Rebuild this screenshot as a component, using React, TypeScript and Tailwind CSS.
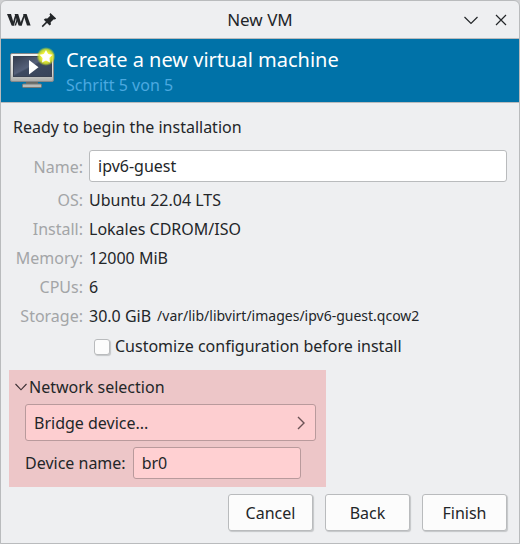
import { useState } from "react";

const rows = [
  { label: "OS:", value: "Ubuntu 22.04 LTS" },
  { label: "Install:", value: "Lokales CDROM/ISO" },
  { label: "Memory:", value: "12000 MiB" },
  { label: "CPUs:", value: "6" },
  { label: "Storage:", value: "30.0 GiB", detail: "/var/lib/libvirt/images/ipv6-guest.qcow2" },
];

function LogoIcon() {
  return (
    <svg className="h-4 w-6" viewBox="0 0 24 16" aria-hidden="true">
      <g fill="#232629">
        <path d="M0 2 H4 L7.4 13.6 H4.6 Z" />
        <path d="M5 13.6 L8.4 2 H10 L7 13.6 Z" />
        <path d="M7.6 2 H11.2 L14.8 13.6 H11.6 Z" />
        <path d="M7.6 13.6 L10.2 5.6 L11.2 7 L9 13.6 Z" />
        <path d="M12.4 13.6 L17 2 H18.4 L14.8 13.6 Z" />
        <path d="M16.2 2 H19.6 L23.6 13.6 H20 Z" />
      </g>
    </svg>
  );
}

function PinIcon() {
  return (
    <svg className="h-4 w-4" viewBox="0 0 16 16" aria-hidden="true">
      <path
        d="M9.4 1 L15.2 6.4 L13.9 7.5 L12.8 7.2 L9.7 10.2 L9.9 12.4 L8.6 13.4 L2.8 7.8 L4.1 6.5 L6.4 6.6 L9.2 3.8 L8.5 2.3 Z"
        fill="#232629"
      />
      <path d="M6.2 9.6 L1.2 14.6" stroke="#232629" strokeWidth="1.5" />
    </svg>
  );
}

function MonitorIcon() {
  return (
    <svg className="h-12 w-12 shrink-0" viewBox="0 0 48 48" aria-hidden="true">
      <defs>
        <linearGradient id="frame" x1="0" y1="0" x2="0" y2="1">
          <stop offset="0" stopColor="#f4f4f3" />
          <stop offset="0.7" stopColor="#d3d4d2" />
          <stop offset="1" stopColor="#a9aba8" />
        </linearGradient>
        <linearGradient id="screen" x1="0" y1="0" x2="1" y2="1">
          <stop offset="0" stopColor="#333c4e" />
          <stop offset="0.45" stopColor="#56617a" />
          <stop offset="0.5" stopColor="#3e4a60" />
          <stop offset="1" stopColor="#38445a" />
        </linearGradient>
        <radialGradient id="glow">
          <stop offset="0" stopColor="#fff" />
          <stop offset="0.45" stopColor="#f4f43a" />
          <stop offset="0.75" stopColor="#d5e32b" stopOpacity="0.85" />
          <stop offset="1" stopColor="#b5d52b" stopOpacity="0" />
        </radialGradient>
      </defs>
      <path d="M17 34 H29 V38 H17 Z" fill="#666965" />
      <rect x="13.5" y="37" width="19" height="3.5" rx="1" fill="#b9bbb8" stroke="#777a76" />
      <rect x="1.5" y="6.5" width="43" height="28" rx="1.5" fill="url(#frame)" stroke="#85888a" />
      <rect x="4.5" y="9.5" width="38" height="20" fill="url(#screen)" stroke="#3a4252" />
      <path d="M20 13 V27.5 L29.5 20.3 Z" fill="#fff" />
      <circle cx="37" cy="9.5" r="9.5" fill="url(#glow)" />
      <path
        d="M37 3 L39.1 7 L43.5 7.8 L40.4 11 L41 15.4 L37 13.5 L33 15.4 L33.6 11 L30.5 7.8 L34.9 7 Z"
        fill="#fff"
      />
    </svg>
  );
}

function DialogButton({ children }: { children: string }) {
  return (
    <button
      type="button"
      className="h-[37px] w-[85px] rounded-[3px] border border-[#b9bbbd] bg-[#fcfcfc] shadow-[1px_1px_1px_#c4c6c8]"
    >
      {children}
    </button>
  );
}

export default function App() {
  const [open, setOpen] = useState(true);
  return (
    <div className="bg-[#cfd0d2] font-['Noto_Sans',sans-serif] text-base text-[#232629]">
      <main className="overflow-hidden rounded-t-md border border-[#b9bbbd] bg-[#eeeff1]">
        <header className="grid h-[38px] grid-cols-[1fr_auto_1fr] items-center border-b border-[#b9bbbd] px-1.5">
          <div className="flex items-center gap-2.5">
            <LogoIcon />
            <button type="button" aria-label="Pin window">
              <PinIcon />
            </button>
          </div>
          <h1 className="text-[17px]">New VM</h1>
          <div className="flex items-center justify-end gap-3.5 pr-1">
            <button type="button" aria-label="Minimize">
              <svg className="h-4 w-4" viewBox="0 0 16 16" fill="none" stroke="#232629" strokeWidth="1.2">
                <path d="M1.5 5 L8 11.5 L14.5 5" />
              </svg>
            </button>
            <button type="button" aria-label="Close">
              <svg className="h-4 w-4" viewBox="0 0 16 16" fill="none" stroke="#232629" strokeWidth="1.2">
                <path d="M3 3 L13 13 M13 3 L3 13" />
              </svg>
            </button>
          </div>
        </header>

        <div className="flex h-16 items-center gap-[9px] border-b border-[#b9bbbd] bg-[#0072a8] pl-2">
          <MonitorIcon />
          <div className="pt-0.5">
            <h2 className="text-xl leading-[26px] text-white">Create a new virtual machine</h2>
            <p className="leading-6 text-[#4ba9e0]">Schritt 5 von 5</p>
          </div>
        </div>

        <form className="pt-3 pb-3" onSubmit={(e) => e.preventDefault()}>
          <p className="px-3 leading-6">Ready to begin the installation</p>

          <div className="mt-[11px] grid grid-cols-[70px_1fr] items-center gap-x-1.5 gap-y-1.5 px-3">
            <label htmlFor="vm-name" className="text-right text-[#a3a5a7]">
              Name:
            </label>
            <input
              id="vm-name"
              defaultValue="ipv6-guest"
              className="mb-px h-8 w-full min-w-0 rounded-[3px] border border-[#b9bbbd] bg-white px-2 outline-none"
            />
            {rows.map((row) => (
              <div key={row.label} className="col-span-2 grid grid-cols-subgrid leading-[23px]">
                <span className="text-right text-[#a3a5a7]">{row.label}</span>
                <span className="flex gap-1.5 whitespace-nowrap">
                  {row.value}
                  {row.detail && <span className="text-sm leading-[22px]">{row.detail}</span>}
                </span>
              </div>
            ))}
            <label className="col-start-2 flex items-center gap-[5px] pt-px pl-[5px] leading-[23px]">
              <input
                type="checkbox"
                className="h-4 w-4 appearance-none rounded-[3px] border border-[#b9bbbd] bg-[#fcfcfc] shadow-[1px_1px_1px_#c4c6c8] checked:bg-[#3daee9]"
              />
              Customize configuration before install
            </label>
          </div>

          <section className="mt-3 ml-2 h-[117px] w-[317px] bg-[#edc6c8] pt-[5px] pl-1.5">
            <button
              type="button"
              aria-expanded={open}
              onClick={() => setOpen(!open)}
              className="flex items-center gap-0.5 leading-6"
            >
              <svg className="h-3 w-3" viewBox="0 0 12 12" fill="none" stroke="#3b2f33" strokeWidth="1.1">
                <path d="M0.5 3 L6 8.8 L11.5 3" />
              </svg>
              Network selection
            </button>
            {open && (
              <div className="mt-[5px] mr-2.5 ml-2.5 flex flex-col gap-1.5">
                <div className="grid items-center">
                  <select
                    aria-label="Network source"
                    className="col-start-1 row-start-1 h-[37px] appearance-none rounded-[3px] border border-[#b99a9c] bg-[#fdced0] px-2 outline-none"
                  >
                    <option>Bridge device...</option>
                  </select>
                  <svg
                    className="pointer-events-none col-start-1 row-start-1 mr-2 h-3.5 w-3.5 justify-self-end"
                    viewBox="0 0 14 14"
                    fill="none"
                    stroke="#6b5255"
                    strokeWidth="1.4"
                  >
                    <path d="M4 1 L10 7 L4 13" />
                  </svg>
                </div>
                <div className="flex items-center gap-[7px]">
                  <label htmlFor="device-name">Device name:</label>
                  <input
                    id="device-name"
                    defaultValue="br0"
                    className="h-8 w-[168px] rounded-[3px] border border-[#b99a9c] bg-[#ffd0d2] px-2 outline-none"
                  />
                </div>
              </div>
            )}
          </section>

          <div className="mt-[7px] flex justify-end gap-3 px-3">
            <DialogButton>Cancel</DialogButton>
            <DialogButton>Back</DialogButton>
            <DialogButton>Finish</DialogButton>
          </div>
        </form>
      </main>
    </div>
  );
}
